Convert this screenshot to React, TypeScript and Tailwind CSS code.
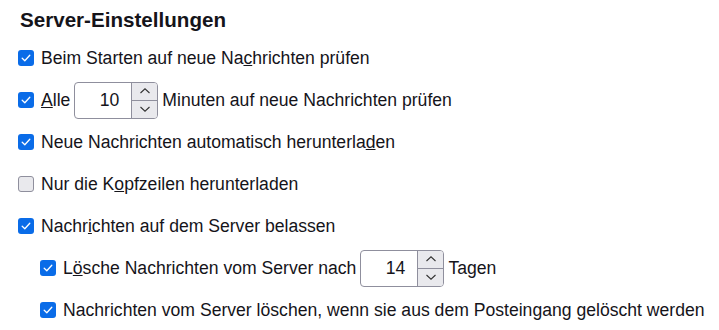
import React from "react";

const Check = ({ checked = true }: { checked?: boolean }) =>
  checked ? (
    <span className="w-4 h-4 rounded-[3px] bg-[#0a6ce8] flex items-center justify-center shrink-0">
      <svg width="12" height="12" viewBox="0 0 12 12" fill="none">
        <path d="M2.2 6.3 L4.8 8.8 L9.8 3.2" stroke="white" strokeWidth="1.3" strokeLinecap="round" strokeLinejoin="round" />
      </svg>
    </span>
  ) : (
    <span className="w-4 h-4 rounded-[3px] bg-[#e9e9ed] border border-[#8f8f9d] shrink-0" />
  );

const Spinner = ({ value }: { value: string }) => (
  <span className="inline-flex h-[37px] w-[84px] border border-[#8f8f9d] rounded-[4px] bg-white overflow-hidden">
    <span className="flex-1 flex items-center justify-end pr-[12px]">{value}</span>
    <span className="w-[26px] flex flex-col border-l border-[#8f8f9d] bg-[#e9e9ed]">
      <span className="flex-1 flex items-center justify-center border-b border-[#8f8f9d]">
        <svg width="12" height="8" viewBox="0 0 12 8" fill="none">
          <path d="M1.5 6 L6 1.8 L10.5 6" stroke="#333" strokeWidth="1.1" />
        </svg>
      </span>
      <span className="flex-1 flex items-center justify-center">
        <svg width="12" height="8" viewBox="0 0 12 8" fill="none">
          <path d="M1.5 2 L6 6.2 L10.5 2" stroke="#333" strokeWidth="1.1" />
        </svg>
      </span>
    </span>
  </span>
);

const Row = ({ children, indent = false, checked = true }: { children: React.ReactNode; indent?: boolean; checked?: boolean }) => (
  <div className={`h-[42px] flex items-center gap-[7px] ${indent ? "pl-[40px]" : "pl-[18px]"}`}>
    <Check checked={checked} />
    <div className="flex items-center gap-[4px] whitespace-nowrap">{children}</div>
  </div>
);

export default function App() {
  return (
    <div className="w-[719px] h-[330px] bg-white text-[#15141a] text-[17.6px] overflow-hidden" style={{ fontFamily: '"Liberation Sans", Arial, sans-serif' }}>
      <h1 className="pl-[20px] pt-[8px] text-[20.6px] font-bold leading-[24px]">Server-Einstellungen</h1>
      <div className="pt-[5px]">
        <Row>
          <span>Beim Starten auf neue Na<u>c</u>hrichten prüfen</span>
        </Row>
        <Row>
          <span><u>A</u>lle</span>
          <Spinner value="10" />
          <span>Minuten auf neue Nachrichten prüfen</span>
        </Row>
        <Row>
          <span>Neue Nachrichten automatisch herunterla<u>d</u>en</span>
        </Row>
        <Row checked={false}>
          <span>Nur die K<u>o</u>pfzeilen herunterladen</span>
        </Row>
        <Row>
          <span>Nachr<u>i</u>chten auf dem Server belassen</span>
        </Row>
        <Row indent>
          <span>L<u>ö</u>sche Nachrichten vom Server nach</span>
          <Spinner value="14" />
          <span>Tagen</span>
        </Row>
        <Row indent>
          <span>Nachrichten vom Server löschen, wenn sie aus dem Postein<u>g</u>ang gelöscht werden</span>
        </Row>
      </div>
    </div>
  );
}
